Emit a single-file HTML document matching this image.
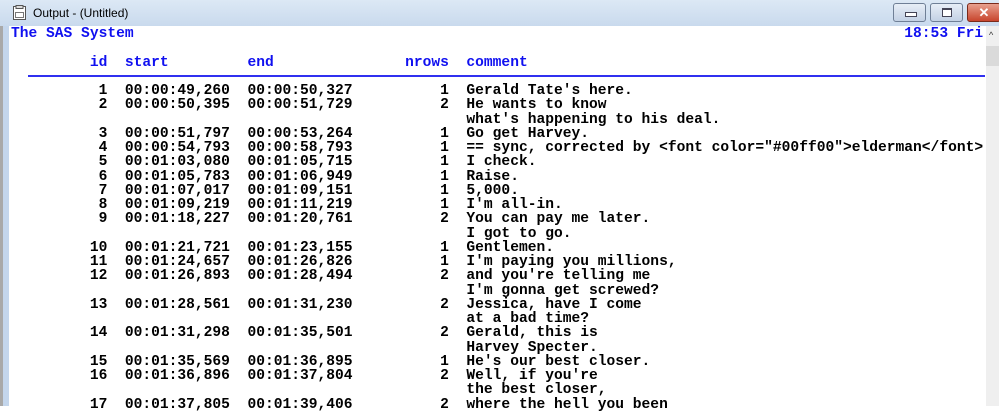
<!DOCTYPE html>
<html><head><meta charset="utf-8"><style>
html,body{margin:0;padding:0;}
body{width:999px;height:406px;overflow:hidden;position:relative;background:#fff;}
.tb{position:absolute;left:0;top:0;width:999px;height:26px;background:linear-gradient(#dce8f5,#c9daed);}
.tt{position:absolute;left:33px;top:6px;font:12px "Liberation Sans",sans-serif;color:#000;}
.lf{position:absolute;left:0;top:26px;width:9px;height:380px;background:#c4d6ec;border-left:3px solid #a9a9a9;box-sizing:border-box;}
.btn{position:absolute;top:3px;height:19px;border:1px solid #6f7f96;border-radius:3px;box-sizing:border-box;background:linear-gradient(#e7eef7,#c3d1e4);}
.sb{position:absolute;left:986px;top:26px;width:13px;height:380px;background:#efefef;}
pre{position:absolute;left:11px;top:27px;margin:0;font:bold 14.6px/14.25px "Liberation Mono",monospace;color:#000;}
.b{color:#1010f0;}
.rule{position:absolute;left:28px;top:75px;width:957px;height:2px;background:#3030f0;}
</style></head><body>
<div class="tb"></div>
<svg style="position:absolute;left:12px;top:5px" width="16" height="16"><rect x="1.5" y="1.5" width="12" height="13" fill="#fff" stroke="#555"/><rect x="4" y="0.5" width="7" height="3" fill="#ddd" stroke="#555"/><rect x="3.5" y="7.5" width="8" height="5" fill="none" stroke="#777"/></svg>
<div class="tt">Output - (Untitled)</div>
<div class="btn" style="left:893px;width:33px"><div style="position:absolute;left:11px;top:8px;width:10px;height:3px;background:#fff;border:1px solid #445"></div></div>
<div class="btn" style="left:930px;width:33px"><div style="position:absolute;left:11px;top:4px;width:8px;height:6px;background:#fff;border:1px solid #445;border-top-width:2px"></div></div>
<div class="btn" style="left:967px;width:34px;background:linear-gradient(#e8a08e,#c8452d);border-color:#7a2a1a;color:#fff;font:bold 13px 'Liberation Sans',sans-serif;text-align:center;line-height:17px">✕</div>
<div class="lf"></div>
<div class="sb"><div style="position:absolute;left:3px;top:4px;font:9px 'Liberation Sans',sans-serif;color:#333">^</div><div style="position:absolute;left:0;top:20px;width:13px;height:20px;background:#dadada"></div></div>
<div class="rule"></div>
<pre><span class="b">The SAS System                                                                                        18:53 Fri</span>

<span class="b">         id  start         end               nrows  comment</span>

          1  00:00:49,260  00:00:50,327          1  Gerald Tate's here.
          2  00:00:50,395  00:00:51,729          2  He wants to know
                                                    what's happening to his deal.
          3  00:00:51,797  00:00:53,264          1  Go get Harvey.
          4  00:00:54,793  00:00:58,793          1  == sync, corrected by &lt;font color="#00ff00"&gt;elderman&lt;/font&gt;
          5  00:01:03,080  00:01:05,715          1  I check.
          6  00:01:05,783  00:01:06,949          1  Raise.
          7  00:01:07,017  00:01:09,151          1  5,000.
          8  00:01:09,219  00:01:11,219          1  I'm all-in.
          9  00:01:18,227  00:01:20,761          2  You can pay me later.
                                                    I got to go.
         10  00:01:21,721  00:01:23,155          1  Gentlemen.
         11  00:01:24,657  00:01:26,826          1  I'm paying you millions,
         12  00:01:26,893  00:01:28,494          2  and you're telling me
                                                    I'm gonna get screwed?
         13  00:01:28,561  00:01:31,230          2  Jessica, have I come
                                                    at a bad time?
         14  00:01:31,298  00:01:35,501          2  Gerald, this is
                                                    Harvey Specter.
         15  00:01:35,569  00:01:36,895          1  He's our best closer.
         16  00:01:36,896  00:01:37,804          2  Well, if you're
                                                    the best closer,
         17  00:01:37,805  00:01:39,406          2  where the hell you been
</pre>
</body></html>
